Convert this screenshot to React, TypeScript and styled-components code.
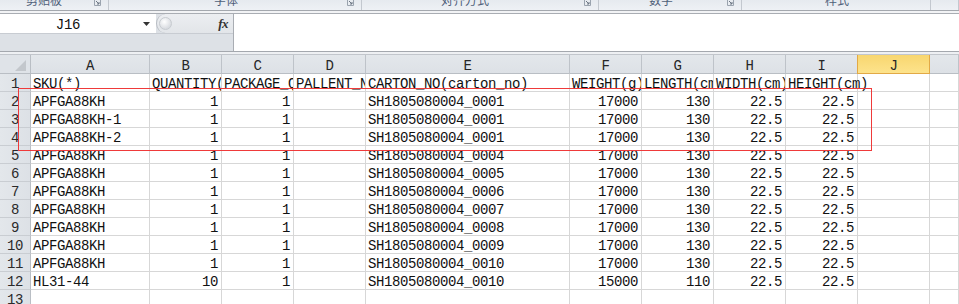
import React from "react";
import styled, { createGlobalStyle } from "styled-components";

const GlobalStyle = createGlobalStyle`
  html, body { margin: 0; padding: 0; background: #ffffff; }
  body { font-family: "Liberation Mono", monospace; }
`;

const MONO = `"Liberation Mono", "DejaVu Sans Mono", monospace`;
const CJK = `"Noto Sans CJK SC", "Noto Sans", sans-serif`;

const Frame = styled.div`
  width: 959px;
  height: 304px;
  overflow: hidden;
  background: #ffffff;
  display: flex;
  flex-direction: column;
`;

/* ---------- ribbon strip ---------- */
const Ribbon = styled.div`
  display: flex;
  height: 10px;
  flex: 0 0 10px;
  background: linear-gradient(#e6eaef, #eef1f5);
  overflow: hidden;
`;

const RibbonGroup = styled.div<{ $w: number; $center: number }>`
  position: relative;
  flex: 0 0 ${(p) => p.$w}px;
  width: ${(p) => p.$w}px;
  border-right: 1px solid #c3c8cf;
  box-sizing: border-box;
  overflow: hidden;
`;

const GroupLabel = styled.div<{ $center: number }>`
  width: ${(p) => p.$center * 2}px;
  text-align: center;
  font-family: ${CJK};
  font-size: 12px;
  line-height: 12px;
  margin-top: -6px;
  color: #4f6079;
  white-space: nowrap;
`;

const Launcher = styled.svg`
  position: absolute;
  right: 7px;
  top: 0;
`;

const Rule = styled.div<{ $c: string; $h?: number }>`
  flex: 0 0 ${(p) => p.$h ?? 1}px;
  height: ${(p) => p.$h ?? 1}px;
  background: ${(p) => p.$c};
`;

/* ---------- formula bar ---------- */
const FormulaBar = styled.div`
  display: flex;
  height: 37px;
  flex: 0 0 37px;
`;

const LeftPane = styled.div`
  flex: 0 0 233px;
  display: flex;
  flex-direction: column;
  background: #dde1e6;
`;

const NameRow = styled.div`
  display: flex;
  height: 19px;
  border-bottom: 1px solid #c8ccd2;
`;

const NameBox = styled.div`
  flex: 0 0 156px;
  background: #ffffff;
  display: flex;
  align-items: center;
  position: relative;
`;

const NameText = styled.span`
  width: 136px;
  text-align: center;
  font-family: ${MONO};
  font-size: 14px;
  letter-spacing: -0.3px;
  color: #111;
  padding-top: 2px;
`;

const DropArrow = styled.svg`
  margin-left: 7px;
`;

const FxArea = styled.div`
  flex: 1;
  display: flex;
  align-items: center;
  justify-content: space-between;
  background: linear-gradient(#eceef1, #e2e5e9);
  border-top-left-radius: 10px;
  border-bottom-left-radius: 10px;
  border-left: 1px solid #b9bdc3;
  padding: 0 5px 0 2px;
`;

const Grip = styled.div`
  width: 11px;
  height: 11px;
  border-radius: 50%;
  background: radial-gradient(circle at 40% 35%, #ffffff, #d9dce1 70%);
  border: 1px solid #c7cbd0;
`;

const Fx = styled.span`
  font-family: "Liberation Serif", serif;
  font-style: italic;
  font-weight: bold;
  font-size: 13px;
  color: #333;
  letter-spacing: -0.5px;
`;

const FormulaInput = styled.div`
  flex: 1;
  background: #ffffff;
  border-left: 1px solid #a9adb3;
`;

/* ---------- sheet ---------- */
const SheetWrap = styled.div`
  position: relative;
  flex: 1;
`;

const Grid = styled.div`
  display: grid;
  grid-template-columns: 31px 119px 72px 72px 72px 204px 72px 72px 72px 72px 72px 1fr;
  grid-auto-rows: 18px;
  grid-template-rows: 19px;
`;

const Corner = styled.div`
  position: relative;
  background: #dfe3e8;
  border-right: 1px solid #b9bec4;
  border-bottom: 1px solid #b9bec4;
  box-sizing: border-box;
`;

const CornerTri = styled.svg`
  position: absolute;
  right: 4px;
  bottom: 2px;
`;

const ColHead = styled.div<{ $sel?: boolean }>`
  box-sizing: border-box;
  background: ${(p) =>
    p.$sel ? "linear-gradient(#f8d66f, #fde38c)" : "linear-gradient(#e3e7eb, #dde1e6)"};
  border-right: 1px solid ${(p) => (p.$sel ? "#e2a946" : "#bec3c9")};
  border-left: ${(p) => (p.$sel ? "1px solid #e2a946" : "none")};
  border-bottom: 1px solid ${(p) => (p.$sel ? "#e2a946" : "#b9bec4")};
  font-family: ${MONO};
  font-size: 14px;
  letter-spacing: -0.4px;
  color: #262626;
  text-align: center;
  line-height: 14px;
  padding-top: 4px;
  margin-left: ${(p) => (p.$sel ? "-1px" : "0")};
`;

const RowHead = styled.div`
  box-sizing: border-box;
  background: linear-gradient(90deg, #e3e7eb, #dde1e6);
  border-right: 1px solid #b9bec4;
  border-bottom: 1px solid #c9cdd2;
  font-family: ${MONO};
  font-size: 14px;
  letter-spacing: -0.4px;
  color: #2a2a2a;
  text-align: center;
  line-height: 14px;
  padding-top: 3px;
`;

const Cell = styled.div<{ $num?: boolean; $spill?: boolean }>`
  box-sizing: border-box;
  border-right: 1px solid #d7d7d7;
  border-bottom: 1px solid #d7d7d7;
  font-family: ${MONO};
  font-size: 14px;
  letter-spacing: -0.4px;
  color: #111;
  line-height: 14px;
  padding: 3px ${(p) => (p.$num ? "3px" : "0")} 0 ${(p) => (p.$num ? "0" : "2px")};
  text-align: ${(p) => (p.$num ? "right" : "left")};
  white-space: nowrap;
  overflow: ${(p) => (p.$spill ? "visible" : "hidden")};
  position: ${(p) => (p.$spill ? "relative" : "static")};
  z-index: ${(p) => (p.$spill ? 1 : "auto")};
`;

const Highlight = styled.div`
  position: absolute;
  left: 18px;
  top: 33px;
  width: 854px;
  height: 63px;
  box-sizing: border-box;
  border: 1px solid #ef3a3a;
  pointer-events: none;
  z-index: 2;
`;

const groups = [
  { w: 109, label: "剪贴板", center: 44, launcher: true },
  { w: 253, label: "字体", center: 117, launcher: true },
  { w: 237, label: "对齐方式", center: 103, launcher: true },
  { w: 143, label: "数字", center: 62, launcher: true },
  { w: 189, label: "样式", center: 95, launcher: false },
  { w: 28, label: "", center: 14, launcher: false },
];

const colLetters = ["A", "B", "C", "D", "E", "F", "G", "H", "I", "J", ""];

type Row = [string, string, string, string, string, string, string, string, string];

const header = [
  "SKU(*)",
  "QUANTITY(quantity)",
  "PACKAGE_QTY",
  "PALLENT_NO",
  "CARTON_NO(carton_no)",
  "WEIGHT(g)",
  "LENGTH(cm)",
  "WIDTH(cm)",
  "HEIGHT(cm)",
];

const rows: Row[] = [
  ["APFGA88KH", "1", "1", "", "SH1805080004_0001", "17000", "130", "22.5", "22.5"],
  ["APFGA88KH-1", "1", "1", "", "SH1805080004_0001", "17000", "130", "22.5", "22.5"],
  ["APFGA88KH-2", "1", "1", "", "SH1805080004_0001", "17000", "130", "22.5", "22.5"],
  ["APFGA88KH", "1", "1", "", "SH1805080004_0004", "17000", "130", "22.5", "22.5"],
  ["APFGA88KH", "1", "1", "", "SH1805080004_0005", "17000", "130", "22.5", "22.5"],
  ["APFGA88KH", "1", "1", "", "SH1805080004_0006", "17000", "130", "22.5", "22.5"],
  ["APFGA88KH", "1", "1", "", "SH1805080004_0007", "17000", "130", "22.5", "22.5"],
  ["APFGA88KH", "1", "1", "", "SH1805080004_0008", "17000", "130", "22.5", "22.5"],
  ["APFGA88KH", "1", "1", "", "SH1805080004_0009", "17000", "130", "22.5", "22.5"],
  ["APFGA88KH", "1", "1", "", "SH1805080004_0010", "17000", "130", "22.5", "22.5"],
  ["HL31-44", "10", "1", "", "SH1805080004_0010", "15000", "110", "22.5", "22.5"],
];

const numericCols = new Set([1, 2, 5, 6, 7, 8]);

export default function App() {
  return (
    <>
      <GlobalStyle />
      <Frame>
        <Ribbon>
          {groups.map((g, i) => (
            <RibbonGroup key={i} $w={g.w} $center={g.center}>
              <GroupLabel $center={g.center}>{g.label}</GroupLabel>
              {g.launcher && (
                <Launcher width="7" height="6" viewBox="0 0 7 6">
                  <path d="M0.5 0 V5.5 H6.5 V0" fill="none" stroke="#9aa3ae" strokeWidth="1" />
                  <path d="M2 1 L5 4 M5 2 V4 H3" fill="none" stroke="#6d7784" strokeWidth="1" />
                </Launcher>
              )}
            </RibbonGroup>
          ))}
        </Ribbon>
        <Rule $c="#a4a8ae" />
        <Rule $c="#f2f3f5" $h={2} />
        <Rule $c="#a9adb3" />
        <FormulaBar>
          <LeftPane>
            <NameRow>
              <NameBox>
                <NameText>J16</NameText>
                <DropArrow width="7" height="4" viewBox="0 0 7 4">
                  <path d="M0 0 H7 L3.5 4 Z" fill="#333" />
                </DropArrow>
              </NameBox>
              <FxArea>
                <Grip />
                <Fx>fx</Fx>
              </FxArea>
            </NameRow>
          </LeftPane>
          <FormulaInput />
        </FormulaBar>
        <Rule $c="#a4a8ae" />
        <Rule $c="#eef0f3" $h={2} />
        <Rule $c="#c2c6cc" />
        <SheetWrap>
          <Grid>
            <Corner>
              <CornerTri width="11" height="11" viewBox="0 0 11 11">
                <path d="M11 0 V11 H0 Z" fill="#c3c7cc" />
              </CornerTri>
            </Corner>
            {colLetters.map((c, i) => (
              <ColHead key={i} $sel={c === "J"}>
                {c}
              </ColHead>
            ))}
            <RowHead>1</RowHead>
            {header.map((h, i) => (
              <Cell key={i} $spill={i === 8}>
                {h}
              </Cell>
            ))}
            <Cell />
            <Cell />
            {rows.map((r, ri) => (
              <React.Fragment key={ri}>
                <RowHead>{ri + 2}</RowHead>
                {r.map((v, ci) => (
                  <Cell key={ci} $num={numericCols.has(ci)}>
                    {v}
                  </Cell>
                ))}
                <Cell />
                <Cell />
              </React.Fragment>
            ))}
            <RowHead>13</RowHead>
            {Array.from({ length: 11 }).map((_, i) => (
              <Cell key={i} />
            ))}
          </Grid>
          <Highlight />
        </SheetWrap>
      </Frame>
    </>
  );
}
